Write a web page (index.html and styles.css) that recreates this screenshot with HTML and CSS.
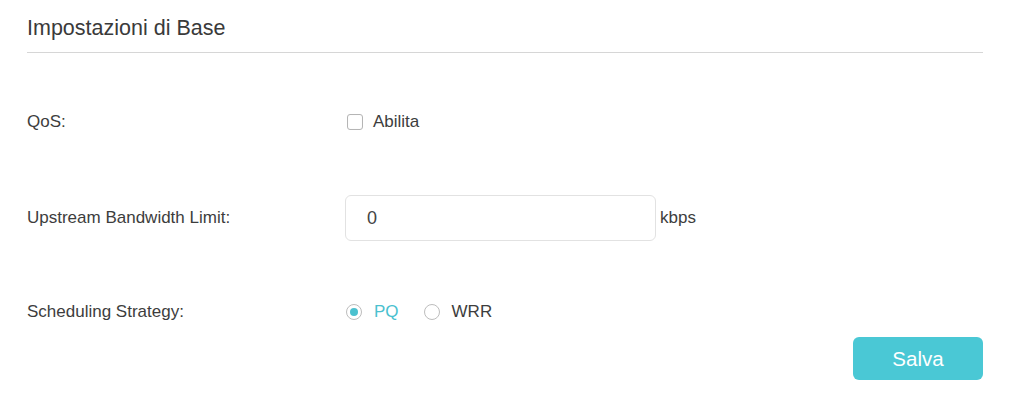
FILE: index.html
```html
<!DOCTYPE html>
<html lang="it">
<head>
<meta charset="utf-8">
<title>Impostazioni di Base</title>
<link rel="stylesheet" href="styles.css">
</head>
<body>
<div class="page">
  <h2 class="title">Impostazioni di Base</h2>
  <div class="form">
    <div class="row row-qos">
      <div class="label">QoS:</div>
      <div class="field">
        <label class="check"><span class="box"></span><span>Abilita</span></label>
      </div>
    </div>
    <div class="row row-bw">
      <div class="label">Upstream Bandwidth Limit:</div>
      <div class="field">
        <div class="input">0</div>
        <span class="unit">kbps</span>
      </div>
    </div>
    <div class="row row-sched">
      <div class="label">Scheduling Strategy:</div>
      <div class="field">
        <label class="radio checked"><span class="dot"></span><span>PQ</span></label>
        <label class="radio"><span class="dot"></span><span>WRR</span></label>
      </div>
    </div>
  </div>
  <div class="actions">
    <button class="save">Salva</button>
  </div>
</div>
</body>
</html>
```

FILE: styles.css
```css
html, body {
  margin: 0;
  padding: 0;
  background: #ffffff;
}
body {
  font-family: "Liberation Sans", Arial, sans-serif;
  color: #3d3d3d;
  width: 1024px;
  height: 419px;
  overflow: hidden;
}
.page {
  padding: 0 41px 0 27px;
}
.title {
  margin: 0;
  padding-top: 15px;
  height: 37px;
  font-size: 21.5px;
  font-weight: normal;
  line-height: 26px;
  color: #3a3a3a;
  border-bottom: 1px solid #d6d6d6;
  box-sizing: content-box;
}
.row {
  display: flex;
  align-items: center;
  font-size: 17px;
  height: 46px;
  margin-top: 48px;
}
.row-qos { margin-top: 46px; }
.row-bw { margin-top: 50px; }
.label {
  width: 318px;
  flex: none;
  color: #3d3d3d;
}
.field {
  display: flex;
  align-items: center;
}
.check {
  display: flex;
  align-items: center;
  gap: 10px;
  color: #3d3d3d;
}
.box {
  width: 14px;
  height: 14px;
  border: 1px solid #b5b5b5;
  border-radius: 3px;
  margin-left: 2px;
  box-shadow: inset 0 0 1px rgba(0,0,0,0.08);
}
.input {
  width: 288px;
  height: 44px;
  border: 1px solid #e2e2e2;
  border-radius: 6px;
  padding-left: 21px;
  display: flex;
  align-items: center;
  font-size: 18px;
  color: #444;
}
.unit {
  margin-left: 4px;
  color: #3d3d3d;
}
.radio {
  display: flex;
  align-items: center;
  gap: 12px;
  margin-right: 24px;
  color: #3d3d3d;
}
.radio.checked { color: #4bc1cf; }
.dot {
  width: 14px;
  height: 14px;
  border: 1px solid #bdbdbd;
  border-radius: 50%;
  position: relative;
  margin-left: 1px;
}
.radio.checked .dot::after {
  content: "";
  position: absolute;
  left: 3px;
  top: 3px;
  width: 8px;
  height: 8px;
  border-radius: 50%;
  background: #4bc1cf;
}
.actions {
  display: flex;
  justify-content: flex-end;
  margin-top: 2px;
}
.save {
  width: 130px;
  height: 43px;
  border: none;
  border-radius: 6px;
  background: #4ac8d5;
  color: #ffffff;
  font-family: "Liberation Sans", Arial, sans-serif;
  font-size: 20.5px;
  padding: 0;
}
```
